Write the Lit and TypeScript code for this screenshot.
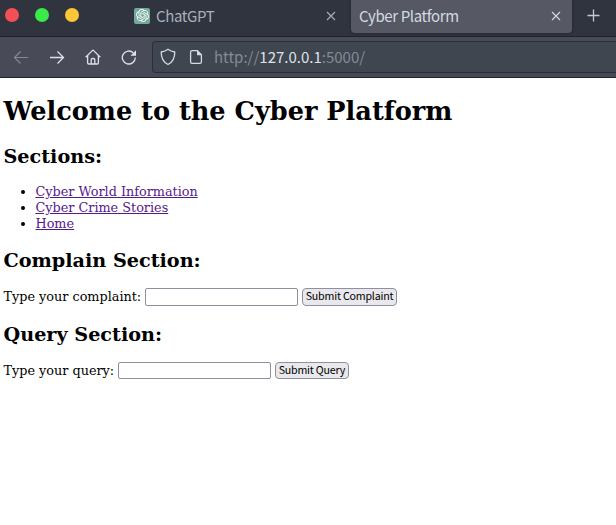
import { LitElement, html, css } from "lit";
import { customElement, property } from "lit/decorators.js";

@customElement("browser-chrome")
class BrowserChrome extends LitElement {
  static styles = css`
    :host { display: block; font-family: "Noto Sans CJK SC", "Noto Sans", sans-serif; color: #d3dae3; }
    svg { display: block; fill: none; stroke: currentColor; flex: none; }
    .tabs { display: flex; height: 36px; background: #2f343f; border-bottom: 1px solid #1f222b; }
    .dots { display: flex; gap: 16px; padding: 8px 0 0 5px; width: 121px; }
    .dot { width: 14px; height: 14px; border-radius: 50%; }
    .red { background: #f54f56; }
    .green { background: #39ea49; }
    .amber { background: #fdc636; }
    .tab { display: flex; box-sizing: border-box; height: 33px; padding: 0 11px 2px 8px; align-items: center; font-size: 15px; line-height: 20px; letter-spacing: -0.38px; }
    .idle { width: 225px; padding-right: 15px; color: #a9afbb; }
    .active { width: 221px; background: #565864; border-radius: 0 0 4px 4px; box-shadow: 0 0 3px #1f222b; color: #d3dae3; }
    .label { flex: 1; white-space: nowrap; }
    .logo { width: 16px; height: 16px; border-radius: 2px; background: #74aa9c; margin-right: 6px; display: flex; align-items: center; justify-content: center; }
    .logo svg { fill: #fff; stroke: none; }
    .plus { margin: 9px 0 0 15px; color: #c5c9d5; }
    .bar { display: flex; height: 40px; align-items: center; background: #484b57; border-bottom: 1px solid #23252e; overflow: hidden; }
    .nav { display: flex; gap: 20px; padding-left: 13px; width: 139px; color: #dde1ea; }
    .dim { color: #858793; }
    .address { display: flex; flex: 1; box-sizing: border-box; height: 32px; align-items: center; border: 1px solid #2b2e39; border-right: 0; border-radius: 4px 0 0 4px; background: #404650; padding-left: 7px; gap: 12px; color: #d3dae3; }
    .page-icon { margin-left: 1px; margin-right: -1px; }
    .url { font-size: 15px; line-height: 20px; color: #858a94; white-space: nowrap; }
    .host { color: #dce1ea; }
  `;

  private close() {
    return html`<svg width="10" height="10" viewBox="0 0 10 10"><path d="M1 1l8 8M9 1L1 9" stroke-width="1.1" /></svg>`;
  }

  render() {
    return html`
      <div class="tabs">
        <div class="dots"><i class="dot red"></i><i class="dot green"></i><i class="dot amber"></i></div>
        <div class="tab idle">
          <span class="logo"><svg width="13" height="13" viewBox="0 0 24 24"><path d="M22.2819 9.8211a5.9847 5.9847 0 0 0-.5157-4.9108 6.0462 6.0462 0 0 0-6.5098-2.9A6.0651 6.0651 0 0 0 4.9807 4.1818a5.9847 5.9847 0 0 0-3.9977 2.9 6.0462 6.0462 0 0 0 .7427 7.0966 5.98 5.98 0 0 0 .511 4.9107 6.051 6.051 0 0 0 6.5146 2.9001A5.9847 5.9847 0 0 0 13.2599 24a6.0557 6.0557 0 0 0 5.7718-4.2058 5.9894 5.9894 0 0 0 3.9977-2.9001 6.0557 6.0557 0 0 0-.7475-7.0729zm-9.022 12.6081a4.4755 4.4755 0 0 1-2.8764-1.0408l.1419-.0804 4.7783-2.7582a.7948.7948 0 0 0 .3927-.6813v-6.7369l2.02 1.1686a.071.071 0 0 1 .038.052v5.5826a4.504 4.504 0 0 1-4.4945 4.4944zm-9.6607-4.1254a4.4708 4.4708 0 0 1-.5346-3.0137l.142.0852 4.783 2.7582a.7712.7712 0 0 0 .7806 0l5.8428-3.3685v2.3324a.0804.0804 0 0 1-.0332.0615L9.74 19.9502a4.4992 4.4992 0 0 1-6.1408-1.6464zM2.3408 7.8956a4.485 4.485 0 0 1 2.3655-1.9728V11.6a.7664.7664 0 0 0 .3879.6765l5.8144 3.3543-2.0201 1.1685a.0757.0757 0 0 1-.071 0l-4.8303-2.7865A4.504 4.504 0 0 1 2.3408 7.872zm16.5963 3.8558L13.1038 8.364 15.1192 7.2a.0757.0757 0 0 1 .071 0l4.8303 2.7913a4.4944 4.4944 0 0 1-.6765 8.1042v-5.6772a.79.79 0 0 0-.407-.667zm2.0107-3.0231l-.142-.0852-4.7735-2.7818a.7759.7759 0 0 0-.7854 0L9.409 9.2297V6.8974a.0662.0662 0 0 1 .0284-.0615l4.8303-2.7866a4.4992 4.4992 0 0 1 6.6802 4.66zM8.3065 12.863l-2.02-1.1638a.0804.0804 0 0 1-.038-.0567V6.0742a4.4992 4.4992 0 0 1 7.3757-3.4537l-.142.0805L8.704 5.459a.7948.7948 0 0 0-.3927.6813zm1.0976-2.3654l2.602-1.4998 2.6069 1.4998v2.9994l-2.5974 1.4997-2.6067-1.4997Z" /></svg></span>
          <span class="label">ChatGPT</span>${this.close()}
        </div>
        <div class="tab active"><span class="label">Cyber Platform</span>${this.close()}</div>
        <svg class="plus" width="13" height="13" viewBox="0 0 13 13"><path d="M6.5 .5v12M.5 6.5h12" stroke-width="1.3" /></svg>
      </div>
      <div class="bar">
        <div class="nav">
          <svg class="dim" width="16" height="16" viewBox="0 0 16 16"><path d="M15 8.5H1.5M7.5 2.5l-6 6 6 6" stroke-width="1.2" /></svg>
          <svg width="16" height="16" viewBox="0 0 16 16"><path d="M1 8.500h13.500M8.500 2.500l6 6-6 6" stroke-width="1.3" /></svg>
          <svg width="16" height="16" viewBox="0 0 16 16"><path d="M.7 8.200L7.300 1.600q.7-.7 1.400 0l6.600 6.600M2.600 6.500v7.200q0 1.300 1.300 1.300h8.200q1.300 0 1.300-1.300V6.500M6.200 15v-4.200q0-1.300 1.300-1.300h1q1.300 0 1.300 1.300V15" stroke-width="1.3" /></svg>
          <svg width="16" height="16" viewBox="0 0 16 16"><path d="M14.300 8.500a6.500 6.500 0 1 1-2-4.700" stroke-width="1.3" /><path d="M15 1.300v5.500H9.500z" fill="currentColor" stroke="none" /></svg>
        </div>
        <div class="address">
          <svg width="16" height="18" viewBox="0 0 16 18"><path d="M8 1.300c1.800 1.400 4 2.300 6.800 2.700 0 5.700-2 10.300-6.800 12.500C3.200 14.300 1.200 9.700 1.200 4 4 3.600 6.200 2.700 8 1.300z" stroke-width="1.3" stroke-linejoin="round" /></svg>
          <svg class="page-icon" width="14" height="16" viewBox="0 0 14 16"><path d="M3 1.700h5.400l4 4V13q0 1.400-1.400 1.400H3Q1.600 14.400 1.600 13V3.100Q1.600 1.700 3 1.700z" stroke-width="1.3" /><path d="M8 1.200l5 5H8z" fill="currentColor" stroke="none" /></svg>
          <span class="url">http://<span class="host">127.0.0.1</span>:5000/</span>
        </div>
      </div>`;
  }
}

@customElement("query-field")
class QueryField extends LitElement {
  @property() label = "";
  @property() action = "";
  static styles = css`
    :host { display: block; height: 18px; }
    .row { display: flex; height: 100%; align-items: stretch; }
    .row label { white-space: nowrap; margin-right: 3.5px; line-height: 17px; }
    .row input { box-sizing: border-box; width: 153px; height: 100%; margin: 0 4px 0 0; padding: 1px 2px; border: 1px solid #8f8f9d; border-radius: 2px; outline: 0; background: #fff; }
    .row button { box-sizing: border-box; height: 100%; margin: 0; padding: 0 3px 2px; border: 1px solid #8f8f9d; border-radius: 4px; background: #e9e9ed; color: #000; font: 10.667px/14px "Noto Sans CJK SC", "Noto Sans", sans-serif; letter-spacing: -0.2px; white-space: nowrap; }
  `;
  render() {
    return html`<div class="row"><label for="field">${this.label}</label><input id="field" type="text" /><button>${this.action}</button></div>`;
  }
}

@customElement("app-root")
class AppRoot extends LitElement {
  static styles = css`
    :host { display: block; height: 525px; overflow: hidden; background: #fff; }
    .page { padding: 18px 3.5px 0; font: 12.8px/16px "DejaVu Serif", serif; color: #000; }
    h1 { margin: 0 0 17px; font-size: 25.6px; line-height: 31px; white-space: nowrap; }
    h2 { margin: 0 0 15px; font-size: 19.2px; line-height: 25px; }
    ul { margin: 0 0 16px; padding-left: 32px; }
    a { color: #551a8b; text-decoration: underline; }
    .first { margin-bottom: 16px; }
    .second { height: 17px; }
  `;
  render() {
    return html`
      <browser-chrome></browser-chrome>
      <main class="page">
        <h1>Welcome to the Cyber Platform</h1>
        <h2>Sections:</h2>
        <ul>
          <li><a href="#">Cyber World Information</a></li>
          <li><a href="#">Cyber Crime Stories</a></li>
          <li><a href="#">Home</a></li>
        </ul>
        <h2>Complain Section:</h2>
        <query-field class="first" label="Type your complaint:" action="Submit Complaint"></query-field>
        <h2>Query Section:</h2>
        <query-field class="second" label="Type your query:" action="Submit Query"></query-field>
      </main>`;
  }
}
